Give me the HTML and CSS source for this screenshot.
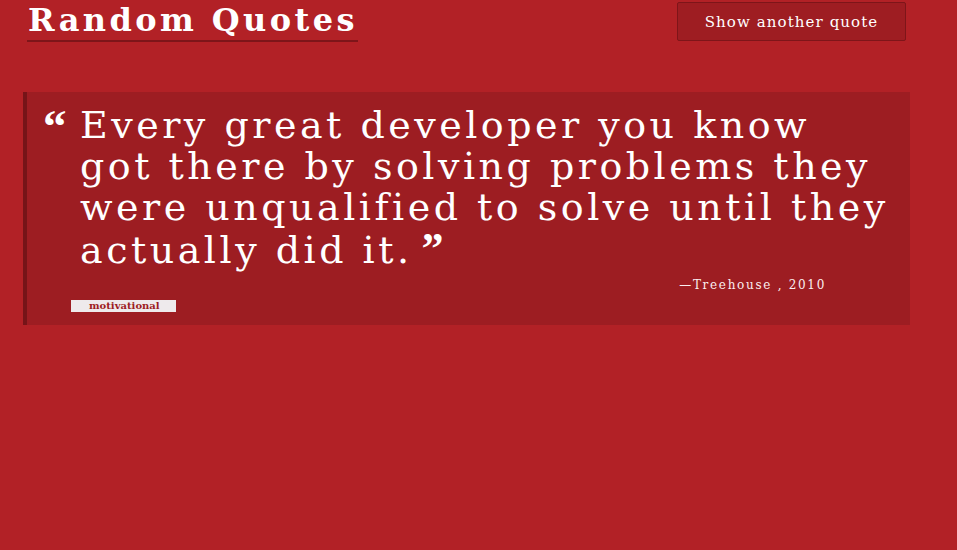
FILE: index.html
```html
<!DOCTYPE html>
<html lang="en">
<head>
<meta charset="utf-8">
<title>Random Quotes</title>
<link rel="stylesheet" href="styles.css">
</head>
<body>
<div class="page">
  <header class="header">
    <h1 class="title">Random Quotes</h1>
    <button class="btn" type="button">Show another quote</button>
  </header>
  <section class="quote-box">
    <p class="quote">Every great developer you know got there by solving problems they were unqualified to solve until they actually did it.</p>
    <p class="source">—Treehouse <span class="year">, 2010</span></p>
    <div class="tags"><span class="tag">motivational</span></div>
  </section>
</div>
</body>
</html>
```
FILE: styles.css
```css
html, body {
  margin: 0;
  padding: 0;
  background: #b22126;
  height: 100%;
}
body {
  font-family: "DejaVu Serif", "Liberation Serif", serif;
  color: #fff;
}
.page {
  padding: 0 47px 0 23px;
}
.header {
  display: flex;
  justify-content: space-between;
  align-items: flex-start;
  padding-left: 4px;
  height: 92px;
}
.title {
  margin: 0;
  font-family: "DejaVu Serif", serif;
  font-size: 32px;
  font-weight: bold;
  line-height: 40px;
  padding: 0 0 0 1px;
  border-bottom: 2px solid #7e1519;
  letter-spacing: 3.4px;
}
.btn {
  margin: 2px 4px 0 0;
  width: 229px;
  height: 39px;
  background: #9e1d22;
  color: #fff;
  border: 1px solid #7e1519;
  border-radius: 2px;
  font-family: "DejaVu Serif", serif;
  font-size: 15px;
  letter-spacing: 1.1px;
}
.quote-box {
  background: #9d1d22;
  border-left: 4px solid #761418;
  height: 233px;
  box-sizing: border-box;
  padding: 13px 0 0 53px;
}
.quote {
  margin: 0;
  max-width: 814px;
  font-size: 38px;
  line-height: 41px;
  position: relative;
  letter-spacing: 3.5px;
}
.quote::before {
  content: "\201C";
  position: absolute;
  left: -37px;
  top: 1px;
  font-family: "Liberation Serif", serif;
  font-size: 47px;
  font-weight: bold;
  letter-spacing: 0;
}
.quote::after {
  content: "\00a0\201D";
  font-family: "Liberation Serif", serif;
  font-weight: bold;
  font-size: 44px;
  letter-spacing: -2px;
}
.source {
  margin: 7px 84px 0 0;
  text-align: right;
  font-size: 12px;
  letter-spacing: 1.7px;
  color: #fbeef0;
}
.tags {
  margin: 2px 0 0 -9px;
}
.tag {
  display: inline-block;
  background: #eeeaec;
  color: #9d1d22;
  font-size: 10px;
  font-weight: bold;
  line-height: 12px;
  padding: 0 16px 0 18px;
}
```
